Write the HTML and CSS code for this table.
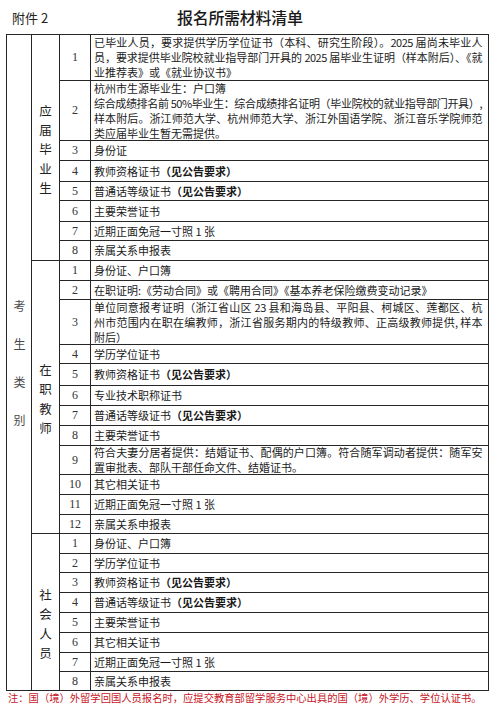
FILE: index.html
```html
<!DOCTYPE html>
<html lang="zh-CN">
<head>
<meta charset="utf-8">
<title>报名所需材料清单</title>
<link rel="stylesheet" href="styles.css">
</head>
<body>
<header class="head">
  <div class="annex">附件 2</div>
  <h1 class="title">报名所需材料清单</h1>
</header>

<div class="sheet">
  <div class="cat"><span>考</span><span>生</span><span>类</span><span>别</span></div>

  <div class="grp grp-grad"><span>应</span><span>届</span><span>毕</span><span>业</span><span>生</span></div>
  <div class="grp grp-teach"><span>在</span><span>职</span><span>教</span><span>师</span></div>
  <div class="grp grp-soc"><span>社</span><span>会</span><span>人</span><span>员</span></div>

  <!-- 应届毕业生 -->
  <div class="num">1</div>
  <div class="txt"><div class="para">
    <span class="ln">已毕业人员，要求提供学历学位证书（本科、研究生阶段）。2025 届尚未毕业人</span>
    <span class="ln">员，要求提供毕业院校就业指导部门开具的 2025 届毕业生证明（样本附后）、《就</span>
    <span class="end">业推荐表》或《就业协议书》</span>
  </div></div>
  <div class="num">2</div>
  <div class="txt"><div class="para">
    <span class="end">杭州市生源毕业生：户口簿</span>
    <span class="ln">综合成绩排名前 50%毕业生：综合成绩排名证明（毕业院校的就业指导部门开具）,</span>
    <span class="ln">样本附后。浙江师范大学、杭州师范大学、浙江外国语学院、浙江音乐学院师范</span>
    <span class="end">类应届毕业生暂无需提供。</span>
  </div></div>
  <div class="num">3</div><div class="txt">身份证</div>
  <div class="num">4</div><div class="txt">教师资格证书<b>（见公告要求）</b></div>
  <div class="num">5</div><div class="txt">普通话等级证书<b>（见公告要求）</b></div>
  <div class="num">6</div><div class="txt">主要荣誉证书</div>
  <div class="num">7</div><div class="txt">近期正面免冠一寸照 1 张</div>
  <div class="num">8</div><div class="txt">亲属关系申报表</div>

  <!-- 在职教师 -->
  <div class="num">1</div><div class="txt">身份证、户口簿</div>
  <div class="num">2</div><div class="txt">在职证明:《劳动合同》或《聘用合同》《基本养老保险缴费变动记录》</div>
  <div class="num">3</div>
  <div class="txt"><div class="para">
    <span class="ln">单位同意报考证明（浙江省山区 23 县和海岛县、平阳县、柯城区、莲都区、杭</span>
    <span class="ln">州市范围内在职在编教师，浙江省服务期内的特级教师、正高级教师提供, 样本</span>
    <span class="end">附后）</span>
  </div></div>
  <div class="num">4</div><div class="txt">学历学位证书</div>
  <div class="num">5</div><div class="txt">教师资格证书<b>（见公告要求）</b></div>
  <div class="num">6</div><div class="txt">专业技术职称证书</div>
  <div class="num">7</div><div class="txt">普通话等级证书<b>（见公告要求）</b></div>
  <div class="num">8</div><div class="txt">主要荣誉证书</div>
  <div class="num">9</div>
  <div class="txt"><div class="para">
    <span class="ln">符合夫妻分居者提供：结婚证书、配偶的户口簿。符合随军调动者提供：随军安</span>
    <span class="end">置审批表、部队干部任命文件、结婚证书。</span>
  </div></div>
  <div class="num">10</div><div class="txt">其它相关证书</div>
  <div class="num">11</div><div class="txt">近期正面免冠一寸照 1 张</div>
  <div class="num">12</div><div class="txt">亲属关系申报表</div>

  <!-- 社会人员 -->
  <div class="num">1</div><div class="txt">身份证、户口簿</div>
  <div class="num">2</div><div class="txt">学历学位证书</div>
  <div class="num">3</div><div class="txt">教师资格证书<b>（见公告要求）</b></div>
  <div class="num">4</div><div class="txt">普通话等级证书<b>（见公告要求）</b></div>
  <div class="num">5</div><div class="txt">主要荣誉证书</div>
  <div class="num">6</div><div class="txt">其它相关证书</div>
  <div class="num">7</div><div class="txt">近期正面免冠一寸照 1 张</div>
  <div class="num">8</div><div class="txt">亲属关系申报表</div>
</div>

<p class="note">注：国（境）外留学回国人员报名时，应提交教育部留学服务中心出具的国（境）外学历、学位认证书。</p>
</body>
</html>
```

FILE: styles.css
```css
* { box-sizing: border-box; }

html, body {
  margin: 0;
  padding: 0;
  background: #ffffff;
}

body {
  width: 500px;
  height: 708px;
  overflow: hidden;
  font-family: "Noto Sans CJK SC", "Noto Sans", sans-serif;
  color: #1a1a1a;
}

.head {
  display: grid;
  grid-template-columns: 165px auto;
  align-items: center;
  height: 34px;
  padding-left: 12px;
}

.annex {
  font-size: 13px;
  color: #222;
}

.title {
  margin: 0;
  font-size: 16px;
  font-weight: 500;
  letter-spacing: -0.3px;
  color: #1a1a1a;
}

.sheet {
  display: grid;
  grid-template-columns: 25px 28px 31px 398px;
  grid-template-rows:
    46px 60px 20px 21px 19px 21px 19px 20px
    20px 19px 45px 19px 22px 20px 20px 20px 29px 20px 20px 19px
    20px 19px 20px 20px 20px 20px 19px 19px;
  margin-left: 6px;
  width: 483px;
  border-top: 1px solid #262626;
  border-left: 1px solid #262626;
}

.sheet > div {
  border-right: 1px solid #262626;
  border-bottom: 1px solid #262626;
}

.cat {
  grid-column: 1;
  grid-row: 1 / span 28;
  display: flex;
  flex-direction: column;
  align-items: center;
  justify-content: center;
  gap: 22px;
  font-size: 12px;
  line-height: 16px;
  color: #4a4a4a;
  padding-left: 1px;
}

.grp {
  grid-column: 2;
  display: flex;
  flex-direction: column;
  align-items: center;
  justify-content: center;
  font-size: 12.5px;
  line-height: 19.3px;
  color: #222;
}

.grp-grad { grid-row: 1 / span 8; padding-top: 3px; }
.grp-teach { grid-row: 9 / span 12; padding-top: 3px; }
.grp-soc { grid-row: 21 / span 8; padding-top: 23px; }

.num {
  grid-column: 3;
  display: flex;
  align-items: center;
  justify-content: center;
  font-family: "Liberation Serif", "DejaVu Serif", serif;
  font-size: 12px;
  color: #333;
}

.txt {
  grid-column: 4;
  display: flex;
  align-items: center;
  padding: 0 6px 0 3px;
  font-size: 11px;
  line-height: 15px;
  white-space: nowrap;
}

.txt b {
  font-weight: 700;
}

.para {
  width: 100%;
}

.para span {
  display: block;
}

.para .ln {
  letter-spacing: -0.5px;
  text-align: justify;
  text-align-last: justify;
}

.para .end {
  text-align: left;
}

.note {
  margin: 0;
  padding-left: 8px;
  font-size: 10.3px;
  line-height: 13px;
  color: #c8141e;
  white-space: nowrap;
}
```
